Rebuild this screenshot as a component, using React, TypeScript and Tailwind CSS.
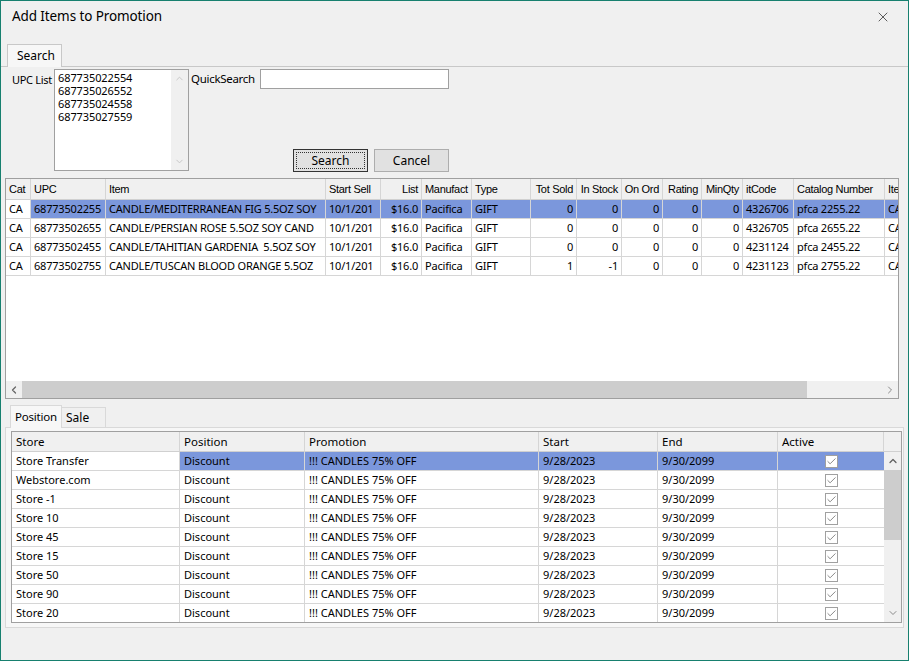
import { X, ChevronUp, ChevronDown, ChevronLeft, ChevronRight, Check } from 'lucide-react'

const topCols = [
  { label: 'Cat', w: 25, align: 'left' },
  { label: 'UPC', w: 75, align: 'left' },
  { label: 'Item', w: 220, align: 'left' },
  { label: 'Start Sell', w: 55, align: 'left' },
  { label: 'List', w: 41, align: 'right' },
  { label: 'Manufact', w: 50, align: 'left' },
  { label: 'Type', w: 59, align: 'left' },
  { label: 'Tot Sold', w: 46, align: 'right' },
  { label: 'In Stock', w: 45, align: 'right' },
  { label: 'On Ord', w: 41, align: 'right' },
  { label: 'Rating', w: 39, align: 'right' },
  { label: 'MinQty', w: 41, align: 'right' },
  { label: 'itCode', w: 51, align: 'left' },
  { label: 'Catalog Number', w: 91, align: 'left' },
  { label: 'Ite', w: 40, align: 'left' },
]

const topRows = [
  ['CA', '68773502255', 'CANDLE/MEDITERRANEAN FIG 5.5OZ SOY', '10/1/201', '$16.0', 'Pacifica', 'GIFT', '0', '0', '0', '0', '0', '4326706', 'pfca 2255.22', 'CA'],
  ['CA', '68773502655', 'CANDLE/PERSIAN ROSE 5.5OZ SOY CAND', '10/1/201', '$16.0', 'Pacifica', 'GIFT', '0', '0', '0', '0', '0', '4326705', 'pfca 2655.22', 'CA'],
  ['CA', '68773502455', 'CANDLE/TAHITIAN GARDENIA  5.5OZ SOY', '10/1/201', '$16.0', 'Pacifica', 'GIFT', '0', '0', '0', '0', '0', '4231124', 'pfca 2455.22', 'CA'],
  ['CA', '68773502755', 'CANDLE/TUSCAN BLOOD ORANGE 5.5OZ', '10/1/201', '$16.0', 'Pacifica', 'GIFT', '1', '-1', '0', '0', '0', '4231123', 'pfca 2755.22', 'CA'],
]

const bottomCols = [
  { label: 'Store', w: 168 },
  { label: 'Position', w: 125 },
  { label: 'Promotion', w: 234 },
  { label: 'Start', w: 119 },
  { label: 'End', w: 120 },
  { label: 'Active', w: 106 },
]

const stores = ['Store Transfer', 'Webstore.com', 'Store -1', 'Store 10', 'Store 45', 'Store 15', 'Store 50', 'Store 90', 'Store 20']

const ui = "font-['Noto_Sans',sans-serif]"
const hdr = "font-['Liberation_Sans',sans-serif]"
const SEL = 'bg-[#7b97dc]'

function CheckBox() {
  return (
    <div className="w-[13px] h-[13px] border border-[#a0a0a0] bg-white flex items-center justify-center">
      <Check size={11} strokeWidth={1.8} className="text-[#707070]" />
    </div>
  )
}

export default function App() {
  return (
    <div className={`w-[909px] h-[661px] border border-[#17806f] bg-[#f0f0f0] flex flex-col overflow-hidden text-black ${ui}`}>
      {/* Title bar */}
      <div className="h-[43px] flex items-start justify-between pl-[11px] pr-[17px] pt-[5px] flex-shrink-0">
        <span className="text-[13.5px] tracking-[-0.1px]">Add Items to Promotion</span>
        <X size={16} strokeWidth={1.2} className="text-[#333] mt-[3px]" />
      </div>

      {/* Search tab */}
      <div className="flex items-end h-[23px] flex-shrink-0">
        <div className="w-[6px] border-b border-[#c8c8c8] h-full" />
        <div className="w-[55px] h-[23px] border border-b-0 border-[#c8c8c8] bg-[#f7f7f7] text-[12px] flex items-center pl-[9px]">
          Search
        </div>
        <div className="flex-1 border-b border-[#c8c8c8] h-full" />
      </div>

      {/* Search area */}
      <div className="h-[111px] flex-shrink-0 flex pl-[11px] pt-[2px]">
        <div className="w-[42px] overflow-hidden">
          <span className="text-[11px] tracking-[-0.3px] mt-[3px] whitespace-nowrap block">UPC List</span>
        </div>
        <div className="w-[135px] h-[102px] border border-[#a0a0a0] bg-white flex">
          <div className="flex-1 text-[11px] leading-[13px] pl-[3px] pt-[1px] tracking-[-0.1px]">
            <div>687735022554</div>
            <div>687735026552</div>
            <div>687735024558</div>
            <div>687735027559</div>
          </div>
          <div className="w-[17px] bg-[#f0f0f0] flex flex-col items-center justify-between py-[3px]">
            <ChevronUp size={11} className="text-[#c4c4c4]" />
            <ChevronDown size={11} className="text-[#c4c4c4]" />
          </div>
        </div>
        <div className="flex flex-col ml-[2px]">
          <div className="flex items-center">
            <span className="w-[69px] text-[11.5px] tracking-[-0.3px] whitespace-nowrap">QuickSearch</span>
            <div className="w-[189px] h-[20px] border border-[#a0a0a0] bg-white" />
          </div>
          <div className="flex mt-[60px] ml-[102px] gap-[6px]">
            <div className="w-[75px] h-[23px] border border-[#333] bg-[#e1e1e1] p-[2px]">
              <div className="w-full h-full border border-dotted border-[#333] text-[12px] flex items-center justify-center">
                Search
              </div>
            </div>
            <div className="w-[75px] h-[23px] border border-[#adadad] bg-[#e1e1e1] text-[12px] flex items-center justify-center">
              Cancel
            </div>
          </div>
        </div>
      </div>

      {/* Top grid */}
      <div className="flex pr-[9px] pl-[4px] flex-shrink-0">
        <div className="w-[894px] h-[221px] border border-[#9f9f9f] bg-white flex flex-col overflow-hidden">
          <div className="flex h-[21px] bg-[#f0f0f0] flex-shrink-0 border-b border-[#d0d0d0]">
            {topCols.map((c, i) => (
              <div
                key={i}
                style={{ width: c.w }}
                className={`flex-shrink-0 border-r border-[#d5d5d5] text-[11px] tracking-[-0.3px] flex items-center px-[3px] overflow-hidden whitespace-nowrap ${hdr} ${c.align === 'right' ? 'justify-end' : ''}`}
              >
                {c.label}
              </div>
            ))}
          </div>
          {topRows.map((r, ri) => (
            <div key={ri} className="flex h-[19px] flex-shrink-0 border-b border-[#d6d6d6]">
              {r.map((v, ci) => (
                <div
                  key={ci}
                  style={{ width: topCols[ci].w }}
                  className={`flex-shrink-0 border-r border-[#d6d6d6] text-[11px] tracking-[-0.2px] flex items-center px-[3px] overflow-hidden whitespace-pre ${ri === 0 && ci > 0 ? SEL : ''} ${topCols[ci].align === 'right' ? 'justify-end' : ''}`}
                >
                  {v}
                </div>
              ))}
            </div>
          ))}
          <div className="flex-1" />
          <div className="h-[17px] flex bg-[#f0f0f0] flex-shrink-0">
            <div className="w-[16px] flex items-center justify-center">
              <ChevronLeft size={12} strokeWidth={2.5} className="text-[#666]" />
            </div>
            <div className="w-[785px] bg-[#cdcdcd]" />
            <div className="flex-1" />
            <div className="w-[16px] flex items-center justify-center">
              <ChevronRight size={12} strokeWidth={2} className="text-[#8a8a8a]" />
            </div>
          </div>
        </div>
      </div>

      {/* Bottom tabs */}
      <div className="flex items-end h-[29px] pl-[9px] flex-shrink-0 mt-[-1px]">
        <div className="w-[52px] h-[23px] border border-b-0 border-[#d9d9d9] bg-[#f7f7f7] text-[11.5px] tracking-[-0.2px] flex items-center pl-[4px] relative z-10 mb-[-1px]">
          Position
        </div>
        <div className="w-[44px] h-[20px] border border-l-0 border-b-0 border-[#d9d9d9] text-[12px] flex items-center pl-[4px]">
          Sale
        </div>
      </div>

      {/* Bottom tab page */}
      <div className="mx-[4px] h-[201px] border border-[#d9d9d9] bg-[#f7f7f7] pt-[3px] pl-[5px] flex-shrink-0">
        <div className="w-[891px] h-[192px] border border-[#a0a0a0] bg-white flex flex-col overflow-hidden">
          <div className="flex h-[20px] bg-[#f0f0f0] flex-shrink-0 border-b border-[#d0d0d0]">
            {bottomCols.map((c, i) => (
              <div
                key={i}
                style={{ width: c.w }}
                className="flex-shrink-0 border-r border-[#d5d5d5] text-[11.5px] flex items-center px-[4px]"
              >
                {c.label}
              </div>
            ))}
            <div className="flex-1" />
          </div>
          <div className="flex flex-1 overflow-hidden">
            <div className="flex flex-col">
              {stores.map((s, ri) => {
                const sel = ri === 0 ? SEL : ''
                return (
                  <div key={ri} className="flex h-[19px] flex-shrink-0 border-b border-[#d6d6d6] text-[11px]">
                    <div style={{ width: 168 }} className="border-r border-[#d6d6d6] flex items-center px-[4px]">{s}</div>
                    <div style={{ width: 125 }} className={`border-r border-[#d6d6d6] flex items-center px-[4px] ${sel}`}>Discount</div>
                    <div style={{ width: 234 }} className={`border-r border-[#d6d6d6] flex items-center px-[4px] ${sel}`}>!!! CANDLES 75% OFF</div>
                    <div style={{ width: 119 }} className={`border-r border-[#d6d6d6] flex items-center px-[4px] ${sel}`}>9/28/2023</div>
                    <div style={{ width: 120 }} className={`border-r border-[#d6d6d6] flex items-center px-[4px] ${sel}`}>9/30/2099</div>
                    <div style={{ width: 106 }} className={`flex items-center justify-center ${sel}`}>
                      <CheckBox />
                    </div>
                  </div>
                )
              })}
            </div>
            <div className="w-[17px] bg-[#f0f0f0] flex flex-col flex-shrink-0">
              <div className="h-[18px] flex items-center justify-center">
                <ChevronUp size={12} strokeWidth={2.5} className="text-[#606060]" />
              </div>
              <div className="h-[70px] bg-[#cdcdcd]" />
              <div className="flex-1" />
              <div className="h-[18px] flex items-center justify-center">
                <ChevronDown size={12} strokeWidth={2} className="text-[#8a8a8a]" />
              </div>
            </div>
          </div>
        </div>
      </div>
      <div className="flex-1" />
    </div>
  )
}
